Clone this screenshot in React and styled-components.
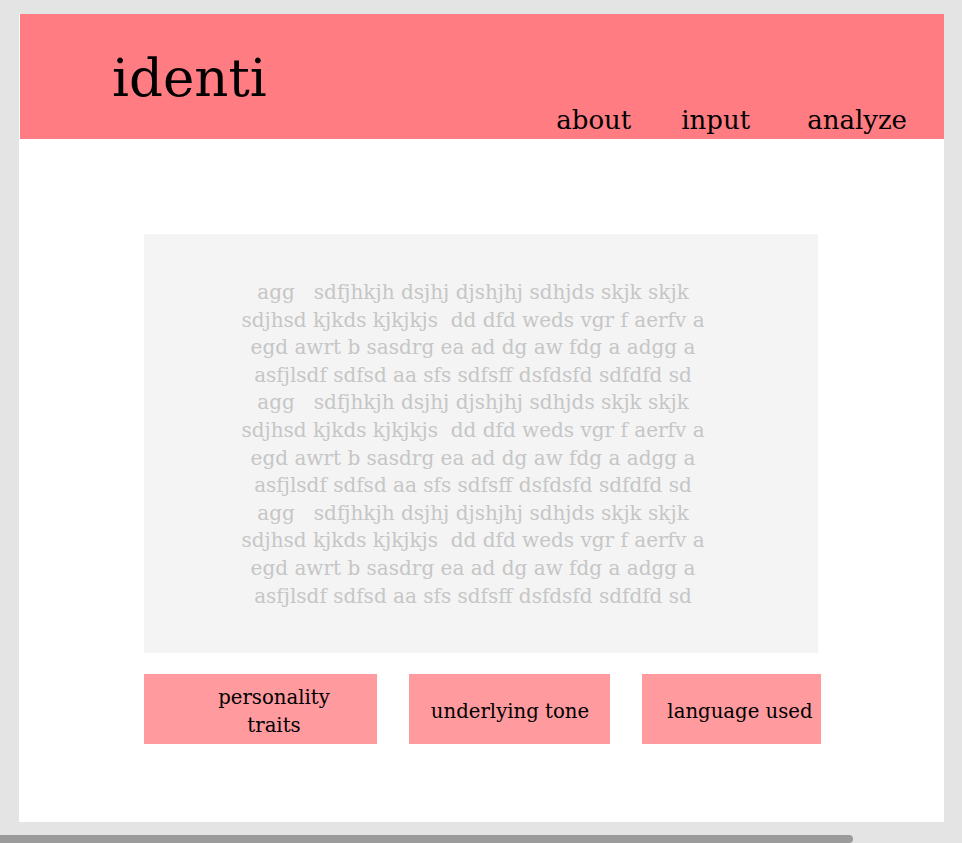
import React from "react";
import styled, { createGlobalStyle } from "styled-components";

const GlobalStyle = createGlobalStyle`
  html, body {
    margin: 0;
    padding: 0;
    overflow: hidden;
    background: #e4e4e4;
  }
  body {
    font-family: "DejaVu Serif", "Liberation Serif", serif;
  }
`;

const Shell = styled.div`
  min-height: 100vh;
  padding-top: 14px;
  box-sizing: border-box;
  background: #e4e4e4;
`;

const Page = styled.div`
  margin-left: 19px;
  width: 925px;
  height: 808px;
  background: #ffffff;
  display: flex;
  flex-direction: column;
`;

const Header = styled.header`
  height: 125px;
  margin-left: 1px;
  background: #ff7c83;
  display: flex;
`;

const Logo = styled.h1`
  margin: 37px 0 0 92px;
  font-size: 53px;
  font-weight: 400;
  line-height: 1;
  color: #000;
`;

const Nav = styled.nav`
  margin-left: auto;
  align-self: flex-end;
  display: flex;
  gap: 50px;
  padding: 0 37px 6px 0;
`;

const NavItem = styled.a`
  font-size: 26px;
  line-height: 1;
  color: #000;
  text-decoration: none;
  margin-left: ${(p) => p.$shift || 0}px;
`;

const Content = styled.main`
  display: flex;
  flex-direction: column;
  padding: 95px 0 0 125px;
`;

const TextBox = styled.div`
  width: 674px;
  box-sizing: border-box;
  padding: 45px 16px 43px 0;
  background: #f4f4f4;
  color: #c6c6c6;
  font-size: 20px;
  line-height: 27.6px;
  text-align: center;
  white-space: pre;
`;

const Actions = styled.div`
  display: flex;
  gap: 32px;
  margin-top: 21px;
`;

const ActionButton = styled.button`
  width: ${(p) => p.$width}px;
  height: 70px;
  box-sizing: border-box;
  padding: 5px ${(p) => p.$right}px 0 ${(p) => p.$left}px;
  border: none;
  background: #ff9a9f;
  color: #000;
  font-family: inherit;
  font-size: 19.7px;
  line-height: 28px;
  text-align: center;
  cursor: pointer;
`;

const ScrollTrack = styled.div`
  margin-top: 13px;
  height: 8px;
`;

const ScrollThumb = styled.div`
  width: 853px;
  height: 100%;
  background: #9b9b9b;
  border-radius: 0 4px 4px 0;
`;

const block = [
  "agg   sdfjhkjh dsjhj djshjhj sdhjds skjk skjk",
  "sdjhsd kjkds kjkjkjs  dd dfd weds vgr f aerfv a",
  "egd awrt b sasdrg ea ad dg aw fdg a adgg a",
  "asfjlsdf sdfsd aa sfs sdfsff dsfdsfd sdfdfd sd",
];
const lines = [...block, ...block, ...block];

const buttons = [
  { label: "personality traits", width: 233, left: 60, right: 33 },
  { label: "underlying tone", width: 201, left: 8, right: 7 },
  { label: "language used", width: 179, left: 17, right: 0 },
];

export default function App() {
  return (
    <>
      <GlobalStyle />
      <Shell>
        <Page>
          <Header>
            <Logo>identi</Logo>
            <Nav>
              <NavItem href="#about">about</NavItem>
              <NavItem href="#input">input</NavItem>
              <NavItem href="#analyze" $shift={7}>
                analyze
              </NavItem>
            </Nav>
          </Header>
          <Content>
            <TextBox>{lines.join("\n")}</TextBox>
            <Actions>
              {buttons.map((b) => (
                <ActionButton
                  key={b.label}
                  $width={b.width}
                  $left={b.left}
                  $right={b.right}
                >
                  {b.label}
                </ActionButton>
              ))}
            </Actions>
          </Content>
        </Page>
        <ScrollTrack>
          <ScrollThumb />
        </ScrollTrack>
      </Shell>
    </>
  );
}
